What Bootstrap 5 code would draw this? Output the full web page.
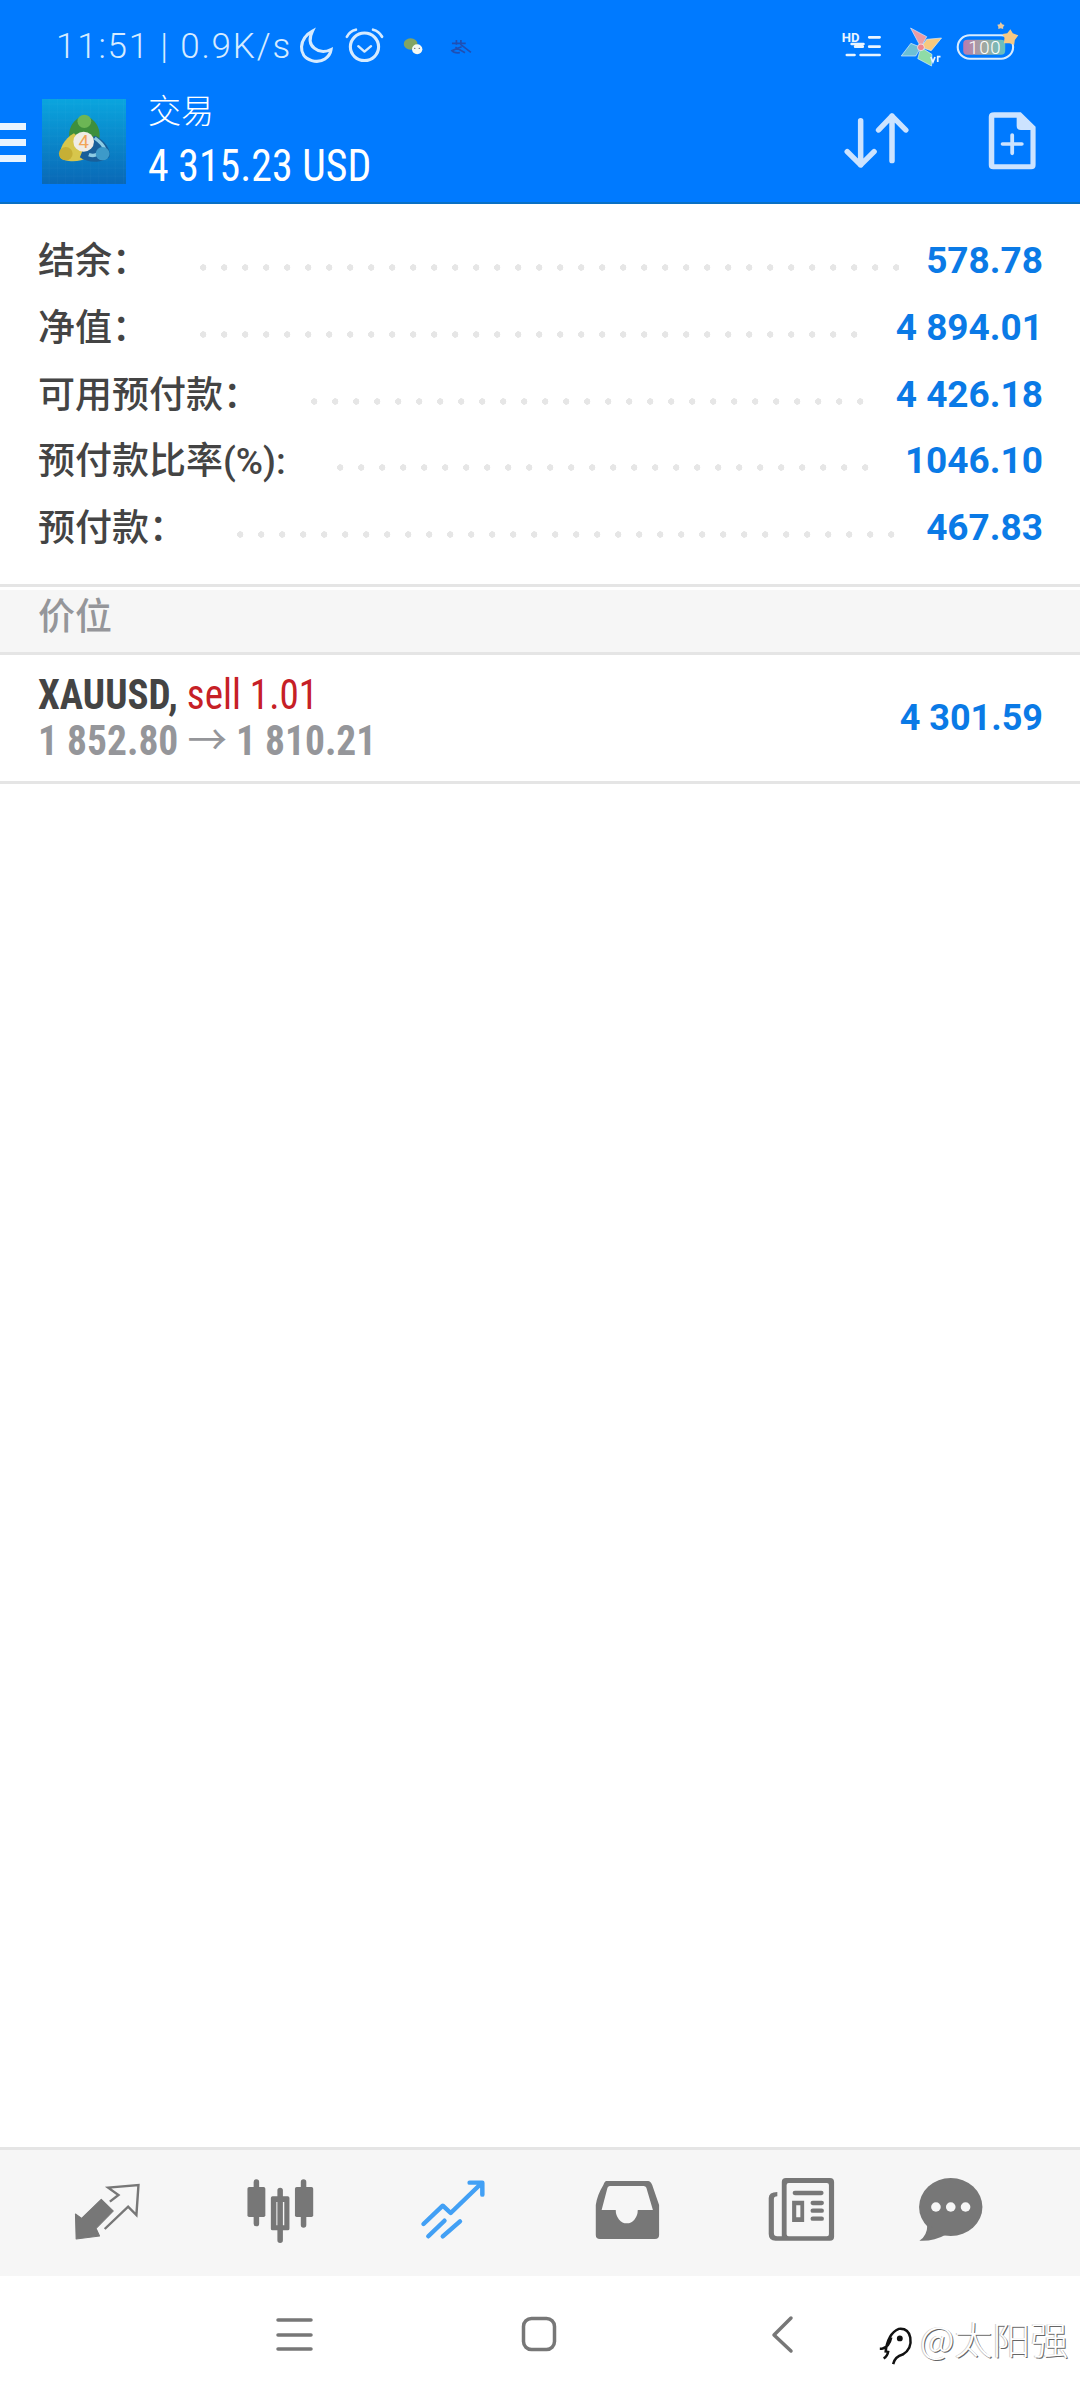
<!doctype html>
<html lang="zh">
<head>
<meta charset="utf-8">
<title>交易</title>
<link rel="stylesheet" href="https://cdn.jsdelivr.net/npm/bootstrap@5.3.0/dist/css/bootstrap.min.css">
<style>
html,body{background:#fff}
body{font-family:Roboto,"Noto Sans CJK SC",sans-serif;color:#444;height:2400px;overflow:hidden}
svg{display:block;flex:none}
.app-head{background:#007aff;height:204px;border-bottom:2px solid #0a70c4;color:#fff}
.stat-row{height:88px;padding:0 0 0 56px}
.stat-text{font-family:Roboto,sans-serif;font-weight:300;font-size:35px;letter-spacing:1.8px;color:#d6ebff;line-height:1;white-space:pre;margin-top:5px}
.acct-row{height:114px}
.burger{width:26px;height:39px;margin-top:35px;background:linear-gradient(#e8f4ff 7px,transparent 7px,transparent 16px,#e8f4ff 16px,#e8f4ff 23px,transparent 23px,transparent 32px,#e8f4ff 32px)}
.logo-tile{margin:11px 0 0 16px}
.acct-text{margin:1px 0 0 22px}
.acct-title{font-family:"Noto Sans CJK SC",sans-serif;font-size:33px;line-height:40px;font-weight:300}
.cond{font-family:"Roboto Condensed",Roboto,sans-serif;font-stretch:75%}
.squeeze{display:block;width:max-content;transform-origin:0 50%}
.acct-sum{font-size:45px;line-height:50px;margin-top:12px;font-weight:400;white-space:pre;transform:scaleX(.93)}
.sum-list{padding:36px 0 0 38px;height:380px}
.sum-line{height:66.8px;padding-right:37px}
.sum-label{font-family:Roboto,"Noto Sans CJK SC",sans-serif;font-stretch:88%;font-size:37px;font-weight:500;color:#444;line-height:1;white-space:nowrap;margin-top:3px;height:37px}
.leader{height:7px;margin:24px 27px 0 51px;background:radial-gradient(circle at 3.2px 3.5px,#e6e6e6 3px,transparent 3.4px) 0 0/21px 7px repeat-x}
.sum-value{font-size:37px;font-weight:700;color:#0a7ae6;line-height:1;white-space:pre;margin-top:2px}
.rule{height:3px;background:#e5e5e5}
.sect-head{background:#f6f6f6;height:62px;margin-top:3px;padding-left:38px;font-family:"Noto Sans CJK SC",sans-serif;font-size:37px;font-weight:500;color:#95969a;line-height:48px}
.pos-row{height:126px;padding:0 37px 0 38px}
.pos-top{font-size:42px;line-height:42px;white-space:pre;color:#444;font-weight:700;transform:scaleX(.93)}
.pos-side{color:#c62026;font-weight:400}
.pos-sub{font-size:42px;line-height:42px;white-space:pre;color:#95969a;font-weight:700;transform:scaleX(.94)}
.flow-arrow{font-family:"Noto Sans CJK SC",sans-serif;font-weight:400}
.pos-profit{font-size:36px;font-weight:700;color:#0a7ae6;white-space:pre}
.tab-bar{background:#f6f6f6;height:126px;position:relative}
.tab-slot{position:absolute;top:0}
.sys-bar{height:124px;position:relative}
.mark-text{position:absolute;left:920px;top:34px;font-family:"Noto Sans CJK SC",sans-serif;font-weight:300;font-size:38px;line-height:56px;color:#fff;text-shadow:1px 1px 0 #666,-1px 0 0 #ccc;white-space:pre}
.mark-logo{position:absolute;left:877px;top:50px}
.sys-ico{position:absolute}
</style>
</head>
<body class="d-flex flex-column">
<header class="app-head flex-shrink-0">
  <div class="stat-row d-flex align-items-center position-relative">
    <span class="stat-text">11:51 | 0.9K/s</span>
    <svg class="tab-slot" style="left:298px;top:26px" width="108.5" height="42" viewBox="865 80 315 125" preserveAspectRatio="none" fill="none" stroke="#d6ebff">
      <path d="M907 95C868 115 862 170 905 183C935 192 958 172 961 150C925 168 885 140 907 95Z" stroke-width="9"/>
      <circle cx="1058" cy="142" r="41" stroke-width="9"/>
      <path d="M1007 112Q1015 95 1033 91M1083 91Q1100 95 1109 112" stroke-width="8" stroke-linecap="round"/>
      <path d="M1040 140L1058 156L1077 140" stroke-width="7" stroke-linecap="round" stroke-linejoin="round"/>
    </svg>
    <svg class="tab-slot" style="left:401px;top:30px" width="72.3" height="30" viewBox="1164 90 210 90" preserveAspectRatio="none">
      <ellipse cx="1192" cy="132" rx="20" ry="17" fill="#82a463"/>
      <circle cx="1211" cy="148" r="15" fill="#f4f8f2"/>
      <circle cx="1204" cy="145" r="2" fill="#556"/><circle cx="1217" cy="145" r="2" fill="#556"/>
      <path d="M1325 120V134M1312 130H1352M1338 120V134L1367 157M1340 140L1312 152Q1318 160 1335 158M1322 142L1350 158" fill="none" stroke="#1f50b4" stroke-width="5"/>
    </svg>
    <svg class="tab-slot" style="left:840px;top:20px" width="222" height="56" viewBox="870 60 645 168" preserveAspectRatio="none">
      <text x="875" y="126" font-family="Roboto,sans-serif" font-weight="700" font-size="38" fill="#eaf5ff">HD</text>
      <g stroke="#eaf5ff" stroke-width="8" stroke-linecap="round" fill="none">
        <path d="M904 132H938M914 140H936M955 112H985M955 140H985M890 165H912M930 165H985"/>
      </g>
      <g stroke="#d8ecff" stroke-width="2">
        <path d="M1105 142L1075 84L1122 110Z" fill="#eb9ca5"/>
        <path d="M1105 142L1122 118L1165 114L1135 152Z" fill="#f7c97e"/>
        <path d="M1105 142L1137 163L1136 198L1096 176Z" fill="#8fdca6"/>
        <path d="M1105 142L1076 130L1048 168L1090 168Z" fill="#6cc0d6"/>
      </g>
      <circle cx="1105" cy="142" r="10" fill="#ee8590" stroke="#f6f6f6" stroke-width="2"/>
      <path d="M1134 171L1140 186L1146 171M1154 186V170H1162" fill="none" stroke="#eaf5ff" stroke-width="5"/>
      <defs><linearGradient id="battFill"><stop offset="0" stop-color="#b97bb0"/><stop offset=".5" stop-color="#a1a8a0"/><stop offset="1" stop-color="#62c2c4"/></linearGradient></defs>
      <rect x="1212" y="106" width="161" height="70" rx="35" fill="none" stroke="#d8ecff" stroke-width="6"/>
      <rect x="1228" y="119" width="122" height="45" rx="12" fill="url(#battFill)"/>
      <text x="1243" y="163" font-family="Roboto,sans-serif" font-weight="300" font-size="54" letter-spacing="2" fill="#fff">100</text>
      <path d="M1365 88L1372 100L1388 106L1378 120L1376 134L1362 130L1346 130L1348 114L1342 102L1356 100Z" fill="#f6c984"/>
      <path d="M1337 66L1341 73L1348 75L1344 81L1344 87L1337 85L1330 87L1330 80L1327 74L1334 73Z" fill="#e8c9a0"/>
    </svg>
  </div>
  <div class="acct-row d-flex position-relative">
    <div class="burger"></div>
    <svg class="flex-shrink-0 logo-tile" width="84" height="85" viewBox="122 295 244 255" preserveAspectRatio="none">
      <defs>
        <linearGradient id="tile" x1="0" y1="0" x2="0" y2="1"><stop offset="0" stop-color="#0aa5de"/><stop offset="1" stop-color="#0968b6"/></linearGradient>
        <pattern id="tileGrid" width="24" height="24" patternUnits="userSpaceOnUse"><path d="M24 0V24H0" fill="none" stroke="#fff" stroke-opacity=".08" stroke-width="1.5"/></pattern>
      </defs>
      <rect x="122" y="295" width="244" height="255" fill="url(#tile)"/>
      <rect x="122" y="295" width="244" height="255" fill="url(#tileGrid)"/>
      <path d="M245 345C205 355 193 395 205 432L285 432C297 395 285 355 245 345Z" fill="#3e8f3c"/>
      <circle cx="245" cy="362" r="20" fill="#6cb655"/>
      <path d="M215 398C185 415 172 445 174 470C190 487 235 485 255 470L240 425Z" fill="#d7c64c"/>
      <circle cx="191" cy="459" r="20" fill="#c6af35"/>
      <path d="M276 405C305 420 322 445 318 468C300 487 255 489 232 470L250 425Z" fill="#185f9a"/>
      <path d="M258 462Q278 470 292 452M275 412Q300 430 304 446" fill="none" stroke="#8ccbe3" stroke-width="10"/>
      <circle cx="298" cy="459" r="20" fill="#3d9ac9"/>
      <circle cx="243" cy="423" r="30" fill="#efece6"/>
      <text x="243" y="443" text-anchor="middle" font-family="Roboto,sans-serif" font-size="54" fill="#f2a557">4</text>
    </svg>
    <div class="acct-text">
      <div class="acct-title">交易</div>
      <div class="acct-sum cond squeeze">4 315.23 USD</div>
    </div>
    <svg class="tab-slot" style="left:839.6px;top:22px" width="196.3" height="60" viewBox="870 330 570 180" preserveAspectRatio="none" fill="none" stroke="#cce3ff" stroke-linecap="round" stroke-linejoin="round">
      <path d="M930 362V495M891 455L930 495L969 455M1021 348V482M982 390L1021 348L1061 390" stroke-width="16"/>
      <path fill="#cce3ff" stroke="none" fill-rule="evenodd" d="M1318 337H1395L1438 380V495Q1438 508 1425 508H1315Q1302 508 1302 495V350Q1302 337 1318 337ZM1318 353V493H1423V390H1395Q1383 390 1383 378V353Z"/>
      <path d="M1370 405V460M1342 432H1398" stroke-width="11"/>
    </svg>
  </div>
</header>

<section class="sum-list flex-shrink-0">
  <div class="sum-line d-flex"><span class="sum-label">结余：</span><span class="leader flex-grow-1"></span><span class="sum-value">578.78</span></div>
  <div class="sum-line d-flex"><span class="sum-label">净值：</span><span class="leader flex-grow-1"></span><span class="sum-value">4 894.01</span></div>
  <div class="sum-line d-flex"><span class="sum-label">可用预付款：</span><span class="leader flex-grow-1"></span><span class="sum-value">4 426.18</span></div>
  <div class="sum-line d-flex"><span class="sum-label">预付款比率(%):</span><span class="leader flex-grow-1"></span><span class="sum-value">1046.10</span></div>
  <div class="sum-line d-flex"><span class="sum-label">预付款：</span><span class="leader flex-grow-1"></span><span class="sum-value">467.83</span></div>
</section>
<div class="rule flex-shrink-0"></div>
<div class="sect-head flex-shrink-0">价位</div>
<div class="rule flex-shrink-0"></div>
<div class="pos-row d-flex align-items-center justify-content-between flex-shrink-0">
  <div>
    <div class="pos-top cond squeeze">XAUUSD, <span class="pos-side">sell 1.01</span></div>
    <div class="pos-sub cond squeeze">1 852.80 <span class="flow-arrow">→</span> 1 810.21</div>
  </div>
  <div class="pos-profit">4 301.59</div>
</div>
<div class="rule flex-shrink-0"></div>
<div class="flex-grow-1"></div>
<div class="rule flex-shrink-0"></div>
<nav class="tab-bar flex-shrink-0">
  <svg class="tab-slot" style="left:72.3px;top:30px" width="70.6" height="61.7" viewBox="210 150 205 185" preserveAspectRatio="none">
    <path d="M295 208L330 243L280 295L290 318L222 327L220 252L238 265Z" fill="#777" stroke="#777" stroke-width="3" stroke-linejoin="round"/>
    <path d="M320 215L345 195L315 173L403 165L397 255L373 230L305 297" fill="none" stroke="#777" stroke-width="7"/>
  </svg>
  <svg class="tab-slot" style="left:243.8px;top:26.7px" width="72.3" height="67" viewBox="708 140 210 201" preserveAspectRatio="none" fill="#777">
    <path d="M744 155V280M813 180V330M881 155V284" stroke="#777" stroke-width="16" stroke-linecap="round"/>
    <rect x="718" y="170" width="52" height="90" rx="5"/>
    <rect x="856" y="170" width="53" height="90" rx="5"/>
    <path fill-rule="evenodd" d="M791 198H835Q840 198 840 203V295Q840 300 835 300H791Q786 300 786 295V203Q786 198 791 198ZM802 215V285H825V215Z"/>
  </svg>
  <svg class="tab-slot" style="left:418.4px;top:28.3px" width="70.2" height="64" viewBox="1215 145 204 192" preserveAspectRatio="none" fill="none" stroke="#42a0f5" stroke-linecap="round" stroke-linejoin="round" stroke-width="13">
    <path d="M1231 283L1287 228L1310 250L1395 165M1365 159H1402V195M1245 320L1292 273M1287 320L1337 275"/>
  </svg>
  <svg class="tab-slot" style="left:591.7px;top:29px" width="70.2" height="64" viewBox="150 147 204 192" preserveAspectRatio="none" fill="#777">
    <path fill-rule="evenodd" d="M192 153H313Q320 153 325 165L345 225V315Q345 327 333 327H173Q161 327 161 315V225Q165 195 183 165Q187 153 192 153ZM202 168Q197 168 195 173L178 240H219A32 40 0 0 0 283 240H327L308 173Q306 168 300 168Z"/>
  </svg>
  <svg class="tab-slot" style="left:767.3px;top:28.3px" width="70.2" height="65" viewBox="660 145 204 195" preserveAspectRatio="none" fill="#777">
    <path fill-rule="evenodd" d="M715 145H843Q855 145 855 157V321Q855 333 843 333H685Q665 333 665 313V205Q665 187 690 187V200Q680 200 680 208V310Q680 320 690 320H703V157Q703 145 715 145ZM723 160Q717 160 717 166V314Q717 320 723 320H834Q840 320 840 314V166Q840 160 834 160Z"/>
    <path fill-rule="evenodd" d="M733 213H768V277H733ZM745 227V263H757V227Z"/>
    <path d="M741 190H818M793 220H819M793 243H819M793 267H819" stroke="#777" stroke-width="13" stroke-linecap="round"/>
  </svg>
  <svg class="tab-slot" style="left:917px;top:28.3px" width="68.2" height="65" viewBox="1095 145 198 195" preserveAspectRatio="none">
    <ellipse cx="1193" cy="232" rx="92" ry="87" fill="#777"/>
    <path d="M1125 285Q1125 318 1102 333Q1145 335 1178 315Z" fill="#777"/>
    <circle cx="1150" cy="232" r="14" fill="#f6f6f6"/><circle cx="1193" cy="232" r="14" fill="#f6f6f6"/><circle cx="1236" cy="232" r="14" fill="#f6f6f6"/>
  </svg>
</nav>
<footer class="sys-bar flex-shrink-0">
  <svg class="sys-ico" style="left:274px;top:40px" width="42" height="40" viewBox="0 0 42 40" stroke="#777" stroke-width="3.5" stroke-linecap="round"><path d="M4 4H37M4 19H37M4 33H37"/></svg>
  <svg class="sys-ico" style="left:520px;top:39px" width="38" height="38" viewBox="0 0 38 38" fill="none" stroke="#777" stroke-width="3.5"><rect x="3.5" y="3.5" width="31" height="31" rx="8"/></svg>
  <svg class="sys-ico" style="left:769px;top:39px" width="28" height="40" viewBox="0 0 28 40" fill="none" stroke="#777" stroke-width="3.5" stroke-linecap="round" stroke-linejoin="round"><path d="M22 3L5 20L22 36"/></svg>
  <svg class="mark-logo" width="38" height="40" viewBox="0 0 38 42" fill="none" stroke="#111" stroke-width="2.6"><path d="M8 28Q10 8 22 3Q32 2 34 12Q36 24 26 30Q18 32 16 40M2 24H4Q12 22 14 12M6 34Q10 32 11 26"/><circle cx="23" cy="13" r="1.8" fill="#111"/></svg>
  <span class="mark-text">@太阳强</span>
</footer>
</body>
</html>
